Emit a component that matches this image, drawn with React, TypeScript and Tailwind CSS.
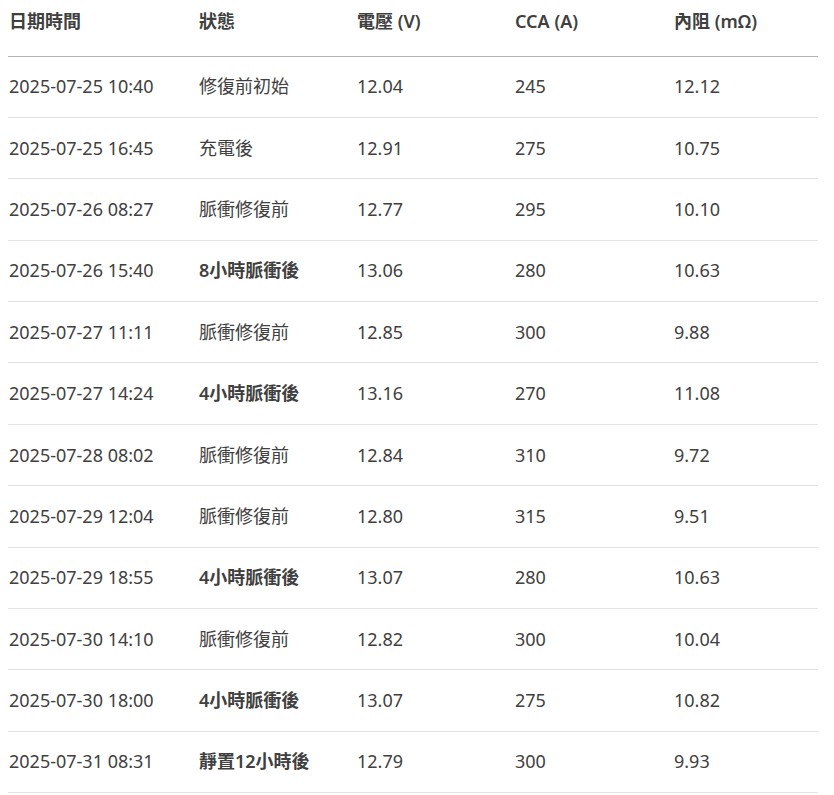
import React from 'react';

const rows: [string, string, boolean, string, string, string][] = [
  ['2025-07-25 10:40', '修復前初始', false, '12.04', '245', '12.12'],
  ['2025-07-25 16:45', '充電後', false, '12.91', '275', '10.75'],
  ['2025-07-26 08:27', '脈衝修復前', false, '12.77', '295', '10.10'],
  ['2025-07-26 15:40', '8小時脈衝後', true, '13.06', '280', '10.63'],
  ['2025-07-27 11:11', '脈衝修復前', false, '12.85', '300', '9.88'],
  ['2025-07-27 14:24', '4小時脈衝後', true, '13.16', '270', '11.08'],
  ['2025-07-28 08:02', '脈衝修復前', false, '12.84', '310', '9.72'],
  ['2025-07-29 12:04', '脈衝修復前', false, '12.80', '315', '9.51'],
  ['2025-07-29 18:55', '4小時脈衝後', true, '13.07', '280', '10.63'],
  ['2025-07-30 14:10', '脈衝修復前', false, '12.82', '300', '10.04'],
  ['2025-07-30 18:00', '4小時脈衝後', true, '13.07', '275', '10.82'],
  ['2025-07-31 08:31', '靜置12小時後', true, '12.79', '300', '9.93'],
];

const font = { fontFamily: '"Noto Sans", "Noto Sans CJK TC", sans-serif' };

export default function App() {
  return (
    <div className="bg-white w-[834px] h-[795px] pl-2 pr-4" style={font}>
      <table className="w-[810px] border-collapse text-[18px] text-[#404040] table-fixed">
        <colgroup>
          <col className="w-[191px]" />
          <col className="w-[158px]" />
          <col className="w-[158px]" />
          <col className="w-[159px]" />
          <col />
        </colgroup>
        <thead>
          <tr className="h-[56px] border-b border-[#b4b4b4] font-semibold text-left">
            <th className="pl-[1px] pb-3 font-semibold">日期時間</th>
            <th className="pb-3 font-semibold">狀態</th>
            <th className="pb-3 font-semibold">電壓 (V)</th>
            <th className="pb-3 font-semibold">CCA (A)</th>
            <th className="pb-3 font-semibold">內阻 (mΩ)</th>
          </tr>
        </thead>
        <tbody>
          {rows.map((r) => (
            <tr key={r[0]} className="h-[61.4px] border-b border-[#e3e3e3]">
              <td className="pl-[1px]">{r[0]}</td>
              <td className={r[2] ? 'font-semibold' : ''}>{r[1]}</td>
              <td>{r[3]}</td>
              <td>{r[4]}</td>
              <td>{r[5]}</td>
            </tr>
          ))}
        </tbody>
      </table>
    </div>
  );
}
